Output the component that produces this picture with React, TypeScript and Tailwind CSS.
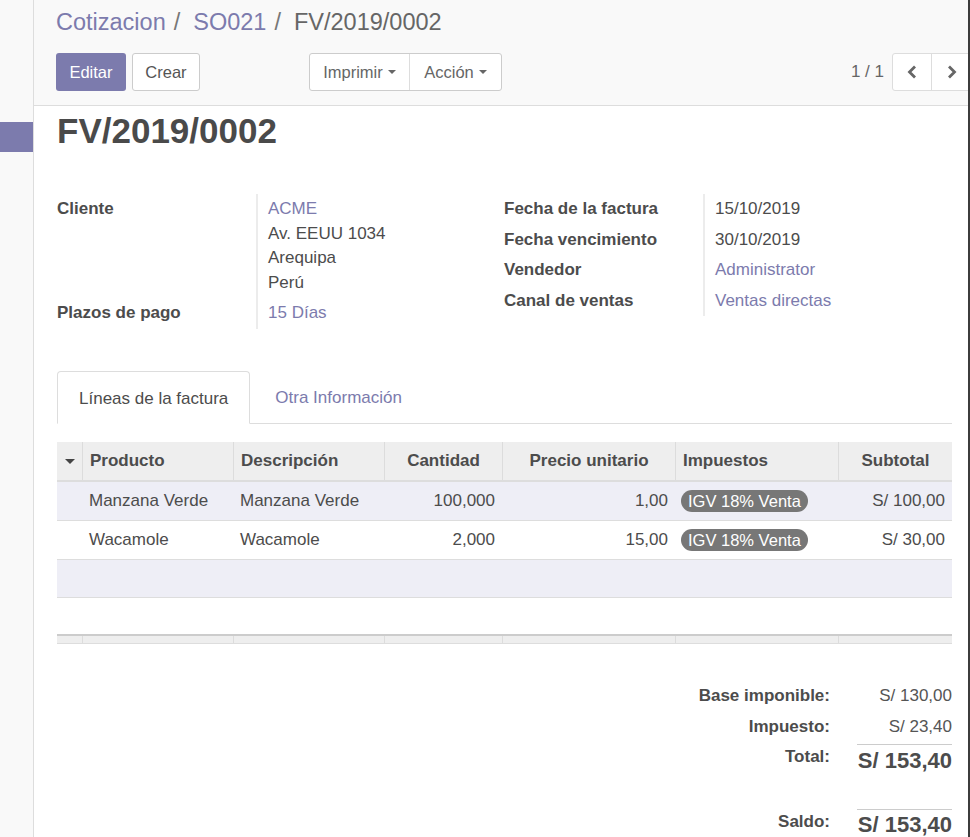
const cols = "grid grid-cols-[25px_151px_151px_118px_173px_163px_114px]";

const Caret = () => (
  <span className="ml-[5px] inline-block h-0 w-0 border-x-[4px] border-t-[4px] border-x-transparent border-t-[#666]" />
);

const Chevron = ({ dir }: { dir: "left" | "right" }) => (
  <svg width="10" height="14" viewBox="0 0 10 14">
    <polyline
      points={dir === "left" ? "8,1.5 2.5,7 8,12.5" : "2,1.5 7.5,7 2,12.5"}
      fill="none"
      stroke="#666"
      strokeWidth="2.8"
      strokeLinejoin="miter"
    />
  </svg>
);

const ControlPanel = () => (
  <div className="h-[106px] shrink-0 border-b border-[#ddd] bg-[#f9f9f9] pl-[22px]">
    <div className="flex pt-[6px] text-[23.5px] leading-[32px] text-[#666]">
      <span className="text-[#7c7bad]">Cotizacion</span>
      <span className="ml-[8px] mr-[13px] text-[#777]">/</span>
      <span className="text-[#7c7bad]">SO021</span>
      <span className="ml-[8px] mr-[13px] text-[#777]">/</span>
      <span>FV/2019/0002</span>
    </div>
    <div className="mt-[15px] flex h-[38px] items-stretch text-[16.5px]">
      <button className="w-[70px] rounded-[3px] bg-[#7c7bad] text-white">Editar</button>
      <button className="ml-[6px] w-[68px] rounded-[3px] border border-[#ccc] bg-white text-[#555]">Crear</button>
      <div className="ml-[109px] flex rounded-[3px] border border-[#ccc] bg-white text-[#666]">
        <button className="flex w-[100px] items-center justify-center border-r border-[#ddd]">
          Imprimir
          <Caret />
        </button>
        <button className="flex w-[91px] items-center justify-center">
          Acción
          <Caret />
        </button>
      </div>
      <div className="ml-auto mr-[-4px] flex items-stretch">
        <span className="mr-[8px] flex items-center text-[17px] text-[#666]">1 / 1</span>
        <div className="flex rounded-[3px] border border-[#ddd] bg-white">
          <button className="flex w-[39px] items-center justify-center border-r border-[#ddd]">
            <Chevron dir="left" />
          </button>
          <button className="flex w-[39px] items-center justify-center">
            <Chevron dir="right" />
          </button>
        </div>
      </div>
    </div>
  </div>
);

const FieldRow = ({ label, children }: { label: string; children: React.ReactNode }) => (
  <div className="grid grid-cols-[201px_1fr] leading-[24.5px]">
    <div className="border-r-2 border-[#ececec] py-[3px] font-bold">{label}</div>
    <div className="py-[3px] pl-[10px]">{children}</div>
  </div>
);

const link = "text-[#7c7bad]";

const lines = [
  { product: "Manzana Verde", desc: "Manzana Verde", qty: "100,000", price: "1,00", sub: "S/ 100,00" },
  { product: "Wacamole", desc: "Wacamole", qty: "2,000", price: "15,00", sub: "S/ 30,00" },
];

const Sheet = () => (
  <div className="flex-1 bg-white pl-[23px] pr-[16px] text-[#4c4c4c]">
    <h1 className="mt-[4px] text-[35px] font-bold leading-[42px] text-[#4a4a4a]">FV/2019/0002</h1>

    <div className="mt-[42px] flex">
      <div className="w-[447px]">
        <FieldRow label="Cliente">
          <div className={link}>ACME</div>
          <div>Av. EEUU 1034</div>
          <div>Arequipa</div>
          <div>Perú</div>
        </FieldRow>
        <FieldRow label="Plazos de pago">
          <span className={link}>15 Días</span>
        </FieldRow>
      </div>
      <div className="flex-1">
        <FieldRow label="Fecha de la factura">15/10/2019</FieldRow>
        <FieldRow label="Fecha vencimiento">30/10/2019</FieldRow>
        <FieldRow label="Vendedor">
          <span className={link}>Administrator</span>
        </FieldRow>
        <FieldRow label="Canal de ventas">
          <span className={link}>Ventas directas</span>
        </FieldRow>
      </div>
    </div>

    <div className="mt-[42px] flex border-b border-[#ddd] leading-[24.5px]">
      <div className="-mb-px rounded-t-[4px] border border-[#ddd] border-b-white bg-white px-[21px] pb-[12px] pt-[15px]">
        Líneas de la factura
      </div>
      <div className="pb-[12px] pl-[25px] pt-[15px] text-[#7c7bad]">Otra Información</div>
    </div>

    <div className="mt-[18px]">
      <div className={`${cols} h-[40px] border-b-2 border-[#ddd] bg-[#eee] font-bold`}>
        <div className="flex items-center justify-center">
          <span className="h-0 w-0 border-x-[5px] border-t-[5px] border-x-transparent border-t-[#444]" />
        </div>
        <div className="flex items-center border-l border-[#dcdcdc] px-[7px]">Producto</div>
        <div className="flex items-center border-l border-[#dcdcdc] px-[7px]">Descripción</div>
        <div className="flex items-center justify-center border-l border-[#dcdcdc] px-[7px]">Cantidad</div>
        <div className="flex items-center justify-center border-l border-[#dcdcdc] px-[7px]">Precio unitario</div>
        <div className="flex items-center border-l border-[#dcdcdc] px-[7px]">Impuestos</div>
        <div className="flex items-center justify-center border-l border-[#dcdcdc] px-[7px]">Subtotal</div>
      </div>
      {lines.map((l, i) => (
        <div
          key={l.product}
          className={`${cols} ${i === 0 ? "h-[38px] bg-[#eeeef6]" : "h-[39px] border-t border-[#ddd] bg-white"}`}
        >
          <div />
          <div className="flex items-center px-[7px]">{l.product}</div>
          <div className="flex items-center px-[7px]">{l.desc}</div>
          <div className="flex items-center justify-end px-[7px]">{l.qty}</div>
          <div className="flex items-center justify-end px-[7px]">{l.price}</div>
          <div className="flex items-center px-[6px]">
            <span className="inline-flex h-[22px] items-center rounded-full bg-[#777] px-[7px] text-[16.5px] text-white">
              IGV 18% Venta
            </span>
          </div>
          <div className="flex items-center justify-end px-[7px]">{l.sub}</div>
        </div>
      ))}
      <div className="h-[39px] border-y border-[#ddd] bg-[#eeeef6]" />
      <div className="h-[36px]" />
      <div className={`${cols} h-[10px] border-t-2 border-b border-t-[#ccc] border-b-[#ddd] bg-[#eee]`}>
        <div />
        <div className="border-l border-[#dcdcdc]" />
        <div className="border-l border-[#dcdcdc]" />
        <div className="border-l border-[#dcdcdc]" />
        <div className="border-l border-[#dcdcdc]" />
        <div className="border-l border-[#dcdcdc]" />
        <div className="border-l border-[#dcdcdc]" />
      </div>
    </div>

    <div className="mt-[37px] flex justify-end">
      <div className="grid grid-cols-[auto_95px] gap-x-[27px]">
        <div className="py-[3px] text-right font-bold leading-[24.5px]">Base imponible:</div>
        <div className="py-[3px] text-right leading-[24.5px] text-[#555]">S/ 130,00</div>
        <div className="py-[3px] text-right font-bold leading-[24.5px]">Impuesto:</div>
        <div className="py-[3px] text-right leading-[24.5px] text-[#555]">S/ 23,40</div>
        <div className="mt-[3px] text-right font-bold leading-[24.5px]">Total:</div>
        <div className="mt-[2px] border-t border-[#ccc] text-right text-[22px] font-bold leading-[32px]">S/ 153,40</div>
        <div className="mt-[33px] text-right font-bold leading-[24.5px]">Saldo:</div>
        <div className="mt-[32px] border-t border-[#ccc] text-right text-[22px] font-bold leading-[30px]">S/ 153,40</div>
      </div>
    </div>
  </div>
);

export default function App() {
  return (
    <div className="flex h-[837px] w-[970px] overflow-hidden bg-white font-['Liberation_Sans',Arial,sans-serif] text-[17px] text-[#4c4c4c]">
      <aside className="w-[34px] shrink-0 border-r border-[#ddd] bg-[#f9f9f9]">
        <div className="mt-[122px] h-[30px] bg-[#7c7bad]" />
      </aside>
      <main className="flex min-w-0 flex-1 flex-col overflow-hidden">
        <ControlPanel />
        <Sheet />
      </main>
      <div className="w-[2px] shrink-0 bg-[#3c3c3c]" />
    </div>
  );
}
